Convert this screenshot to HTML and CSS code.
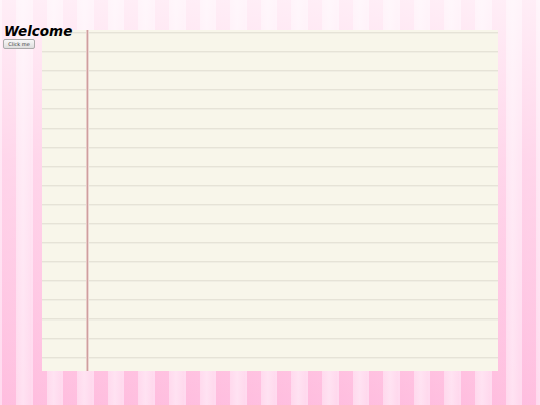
FILE: index.html
```html
<!DOCTYPE html>
<html>
<head>
<meta charset="utf-8">
<link rel="stylesheet" href="styles.css">
</head>
<body>
<div class="stage">
  <div class="paper"><div class="margin-line"></div></div>
  <div class="intro">
    <h1 class="title">Welcome</h1>
    <button class="btn" type="button">Click me</button>
  </div>
</div>
</body>
</html>
```
FILE: styles.css
```css
html, body {
  margin: 0;
  padding: 0;
  width: 540px;
  height: 405px;
  overflow: hidden;
}
body {
  background:
    linear-gradient(to bottom, rgba(255,255,255,0.75) 0%, rgba(255,255,255,0.4) 40%, rgba(255,255,255,0.05) 100%),
    repeating-linear-gradient(to right,
      #ffd8ee 0px, #ffd8ee 2px,
      #ffbadd 2px, #ffbcde 16px,
      #ffd6ec 16px, #ffe0f1 23px, #ffd6ec 30.6px);
  font-family: "DejaVu Sans", sans-serif;
}
.stage {
  display: grid;
  width: 540px;
  height: 405px;
}
.paper, .intro {
  grid-area: 1 / 1;
}
.paper {
  margin: 30px 42px 34px 42px;
  background-color: #f8f6ea;
  background-image: repeating-linear-gradient(to bottom,
    transparent 0px, transparent 2px,
    #e6e3d7 2px, #e6e3d7 3px,
    #f0eee3 3px, #f0eee3 4px,
    transparent 4px, transparent 19.1px);
  display: flex;
}
.margin-line {
  margin-left: 44px;
  width: 1px;
  background: #cf9e9e;
  border-left: 1px solid #e8cbc8;
  border-right: 1px solid #ecd6d2;
}
.intro {
  display: flex;
  flex-direction: column;
  align-items: flex-start;
  padding: 23px 0 0 3px;
}
.title {
  margin: 0 0 -1px 1px;
  font-family: "DejaVu Sans", sans-serif;
  font-weight: bold;
  font-style: italic;
  font-size: 13.5px;
  line-height: 17px;
  color: #000;
}
.btn {
  margin: 0;
  padding: 0;
  height: 10px;
  width: 32px;
  white-space: nowrap;
  font-family: "DejaVu Sans", sans-serif;
  font-size: 5px;
  line-height: 8px;
  color: #333;
  background: linear-gradient(#f7f7f7, #dedede);
  border: 1px solid #aaa;
  border-radius: 2px;
}
```
